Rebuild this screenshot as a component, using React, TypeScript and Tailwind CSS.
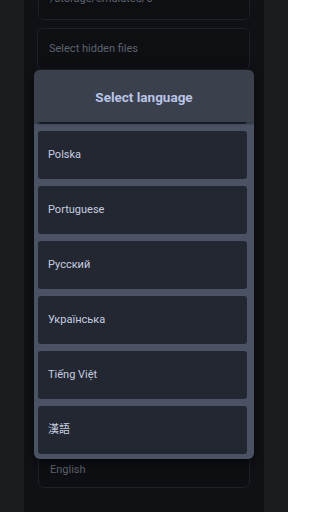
import React from "react";

const languages = [
  "Polska",
  "Portuguese",
  "Русский",
  "Українська",
  "Tiếng Việt",
  "漢語",
];

function Field({ label, className = "" }: { label: string; className?: string }) {
  return (
    <div
      className={`flex h-[42px] items-center rounded-[6px] border border-[#1d2128] bg-[#0d0f13] px-[11px] text-[11px] text-[#5d636e] ${className}`}
    >
      {label}
    </div>
  );
}

export default function App() {
  return (
    <div
      className="relative flex h-[512px] w-[288px] justify-center overflow-hidden bg-[#1a1c20]"
      style={{ fontFamily: "Roboto, 'Noto Sans CJK TC', sans-serif" }}
    >
      {/* 背景の設定画面 */}
      <div className="flex w-[240px] flex-col bg-[#0f1115] px-[14px]">
        <div className="-mt-[22px] flex flex-col gap-2">
          <Field label="/storage/emulated/0" className="items-end pb-[12px]" />
          <Field label="Select hidden files" className="-ml-px" />
        </div>
        <div className="h-[376px]" />
        <Field label="English" className="items-start pt-[15px]" />
      </div>

      {/* 言語選択ダイアログ */}
      <div className="absolute left-[34px] top-[70px] w-[220px] overflow-hidden rounded-[6px] bg-[#4a5264] shadow-[0_4px_10px_rgba(0,0,0,0.5)]">
        <div className="relative z-10 flex h-[52px] items-center justify-center bg-[#3a404c] pt-[2px] text-[13.5px] font-bold text-[#b9c4e6] shadow-[0_2px_2px_rgba(0,0,0,0.35)]">
          Select language
        </div>
        <div className="flex flex-col gap-[7px] pb-[5px] pl-[4px] pr-[7px]">
          <div className="-mt-[46px] h-[48px] rounded-[3px] bg-[#222731]" />
          {languages.map((lang) => (
            <div
              key={lang}
              className="flex h-[48px] items-center rounded-[3px] bg-[#222731] px-[10px] text-[11px] text-[#c8cee0]"
            >
              {lang}
            </div>
          ))}
        </div>
      </div>
    </div>
  );
}
